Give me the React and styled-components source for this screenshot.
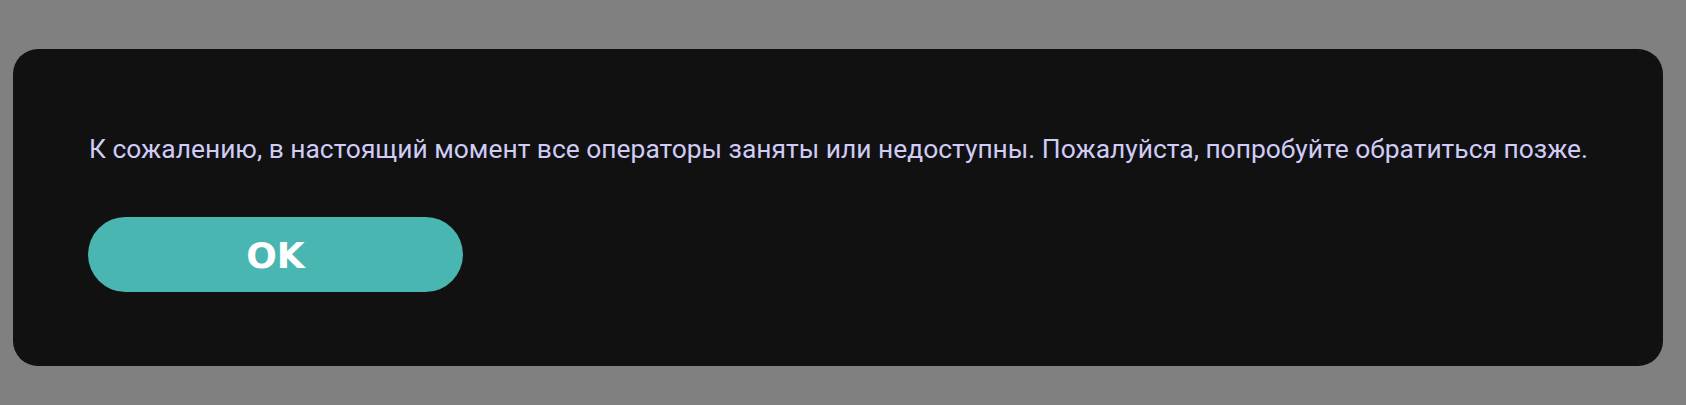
import React from "react";
import styled, { createGlobalStyle } from "styled-components";

const GlobalStyle = createGlobalStyle`
  html, body {
    margin: 0;
    padding: 0;
    background: #808080;
  }
  body {
    font-family: "Roboto", "DejaVu Sans", sans-serif;
  }
`;

const Overlay = styled.div`
  box-sizing: border-box;
  width: 100%;
  min-height: 405px;
  padding: 49px 26px 0 13px;
  display: flex;
`;

const Dialog = styled.div`
  box-sizing: border-box;
  flex: 1;
  height: 317px;
  background: #111112;
  border-radius: 25px;
  padding: 84px 75px 0 75px;
  display: flex;
  flex-direction: column;
  align-items: flex-start;
  gap: 52px;
`;

const Message = styled.p`
  margin: 0;
  color: #d0ccf6;
  font-family: "Roboto", "Noto Sans", sans-serif;
  font-size: 26.4px;
  line-height: 32px;
  white-space: nowrap;
  padding-left: 1px;
`;

const Button = styled.button`
  box-sizing: border-box;
  width: 375px;
  height: 75px;
  border: none;
  border-radius: 38px;
  background: #4ab6b1;
  color: #ffffff;
  font-family: "DejaVu Sans", sans-serif;
  font-weight: 700;
  font-size: 36px;
  display: flex;
  align-items: center;
  justify-content: center;
  padding: 2px 0 0 0;
  cursor: pointer;
`;

export default function App() {
  return (
    <>
      <GlobalStyle />
      <Overlay>
        <Dialog>
          <Message>
            К сожалению, в настоящий момент все операторы заняты или недоступны. Пожалуйста, попробуйте обратиться позже.
          </Message>
          <Button>OK</Button>
        </Dialog>
      </Overlay>
    </>
  );
}
